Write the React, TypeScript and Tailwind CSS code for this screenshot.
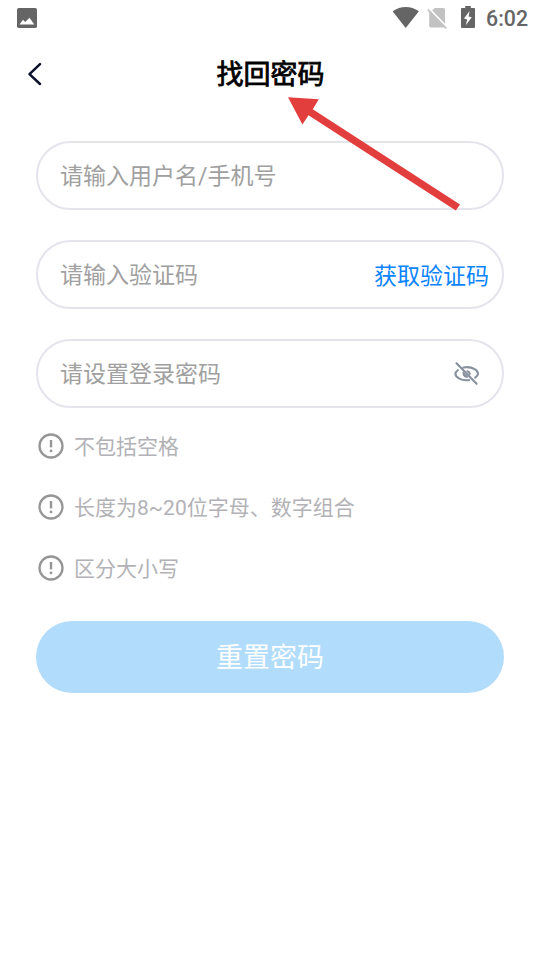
import type { ReactNode } from "react";

function StatusBar() {
  return (
    <div className="flex h-9 items-start justify-between pl-[17px] pr-3 text-[#656565]">
      <svg className="mt-2" width="20" height="20" viewBox="0 0 20 20">
        <rect width="20" height="20" rx="1.8" fill="currentColor" />
        <path d="M2.5 16.4 6 11.8 8.2 14 12.5 9.8 17.3 16.4Z" fill="#fff" />
      </svg>
      <div className="flex items-start">
        <svg width="28" height="36" viewBox="0 0 28 36">
          <path d="M.6 11.3C8.5 5.5 19 5.5 26.9 11.3L13.7 28Z" fill="currentColor" />
        </svg>
        <svg className="ml-[7px]" width="20" height="36" viewBox="0 0 20 36">
          <path d="M7.6 8H16.2Q18 8 18 9.8V23.8L5.2 10.6Z" fill="#c2c2c2" />
          <path d="M2.2 11 17.6 27.5H3.8Q2.2 27.5 2.2 25.8Z" fill="#c2c2c2" />
          <path d="M.9 9.6 19.2 28.4" stroke="#c2c2c2" strokeWidth="1.8" />
        </svg>
        <svg className="ml-[14px]" width="14" height="36" viewBox="0 0 14 36">
          <path d="M4.2 6H9.8V8H13.1Q14 8 14 8.9V27.1Q14 28 13.1 28H.9Q0 28 0 27.1V8.9Q0 8 .9 8H4.2Z" fill="currentColor" />
          <path d="M8.6 11 3 18.6 6.2 19.4 4.8 25.3 10.8 17.3 7.6 16.6Z" fill="#fff" />
        </svg>
        <span className="ml-[11px] mt-[6px] font-[Roboto,sans-serif] text-[21.3px] font-medium leading-[25px]">6:02</span>
      </div>
    </div>
  );
}

function Field({ hint, children }: { hint: string; children?: ReactNode }) {
  return (
    <div className="flex h-[69px] items-center justify-between rounded-[34.5px] border-2 border-[#e4e4ec] pl-[22px] text-[23px] leading-[34px] text-[#a0a0a0]">
      <span className="pt-[2px]">{hint}</span>
      {children}
    </div>
  );
}

function Tip({ children }: { children: ReactNode }) {
  return (
    <li className="flex h-[31px] items-start gap-[10px] pl-[2px]">
      <svg className="mt-[2px]" width="26" height="26" viewBox="0 0 26 26" fill="none" stroke="#969696">
        <circle cx="13" cy="13" r="11.5" strokeWidth="2.3" />
        <path d="M13 7V14.4" strokeWidth="2.4" />
        <circle cx="13" cy="17.9" r="1.4" fill="#969696" stroke="none" />
      </svg>
      <span className="pt-px text-[21px] leading-[31px] text-[#b2b2b6]">{children}</span>
    </li>
  );
}

export default function App() {
  return (
    <div className="relative h-[960px] w-[540px] overflow-hidden bg-white font-[Roboto,'Noto_Sans_CJK_SC',sans-serif]">
      <StatusBar />
      <header className="grid h-[75px] grid-cols-[70px_1fr_70px] items-center">
        <svg className="ml-[26px]" width="18" height="26" viewBox="0 0 18 26" fill="none">
          <path d="M14 3.2 3.5 13.1 14 23" stroke="#0b102b" strokeWidth="2.5" strokeLinecap="round" strokeLinejoin="round" />
        </svg>
        <h1 className="pl-px pt-[2px] text-center text-[27px] leading-10 text-black [-webkit-text-stroke:0.8px_#000]">找回密码</h1>
      </header>
      <main className="px-9 pt-[30px]">
        <div className="flex flex-col gap-[30px]">
          <Field hint="请输入用户名/手机号" />
          <Field hint="请输入验证码">
            <button className="mr-[13px] pt-[4px] text-[#0a84ff]">获取验证码</button>
          </Field>
          <Field hint="请设置登录密码">
            <svg className="mr-[21px]" width="28" height="28" viewBox="0 0 28 28" fill="none" stroke="#87909d" strokeWidth="2.1" strokeLinecap="round">
              <path d="M4.8 10.2Q2.4 12.1 2.4 13.7C2.4 17.2 8 20.3 13.7 20.3Q15 20.3 16.2 20" />
              <path d="M10.4 7.6Q12.2 7.1 13.9 7.1C19.9 7.1 25 10.5 25 13.8Q25 15.8 22.2 17.7" />
              <path d="M10.2 12.4C9.4 15.4 11.6 18 14.9 17.1L10.2 12.4Z" fill="#87909d" strokeWidth="1" />
              <path d="M14.4 11.2Q16.5 11.8 16.8 14" />
              <path d="M3.5 3.2 23.6 23.8" />
            </svg>
          </Field>
        </div>
        <ul className="mt-[23px] flex flex-col gap-[30px]">
          <Tip>不包括空格</Tip>
          <Tip>长度为8~20位字母、数字组合</Tip>
          <Tip>区分大小写</Tip>
        </ul>
        <button className="mt-[37px] block h-[72px] w-full rounded-[36px] bg-[#b1dcfb] pt-[2px] text-[27px] leading-10 text-white">重置密码</button>
      </main>
      <svg className="pointer-events-none absolute left-[280px] top-[90px]" width="190" height="125" viewBox="0 0 190 125">
        <path d="M8 7.3 38.8 9.2 32.8 19.2 180 114.5 175.8 120.5 28.5 25.2 22.4 34.5Z" fill="#e33e3e" />
      </svg>
    </div>
  );
}
